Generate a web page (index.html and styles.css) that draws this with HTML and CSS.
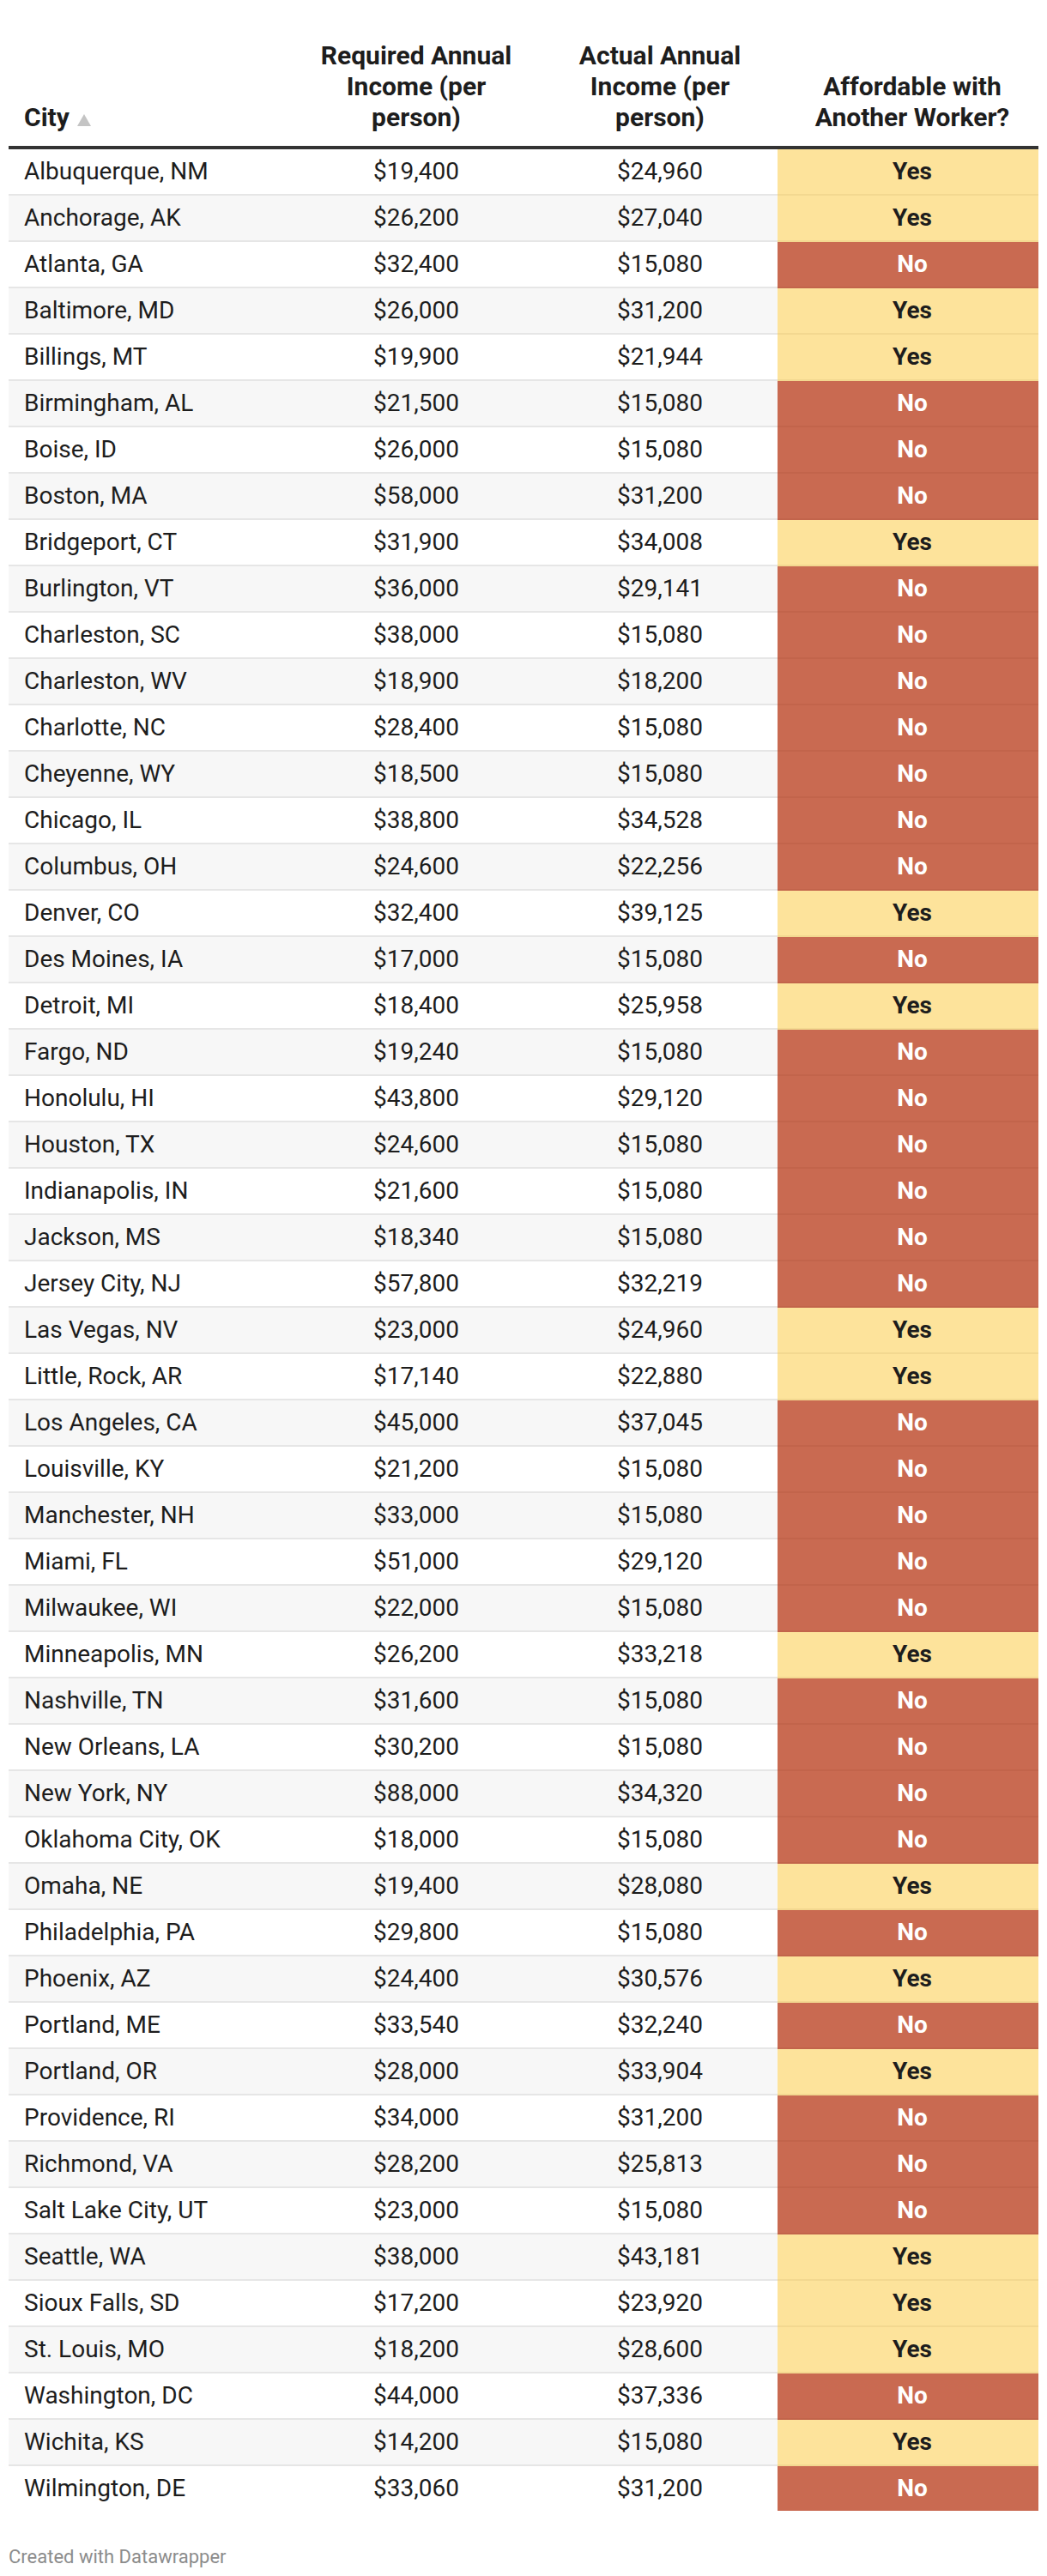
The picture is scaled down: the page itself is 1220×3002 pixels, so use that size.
FILE: index.html
```html
<!DOCTYPE html>
<html lang="en">
<head>
<meta charset="utf-8">
<title>Affordability table</title>
<link rel="stylesheet" href="styles.css">
</head>
<body>
<div class="wrap">
<div class="dw-table" role="table">
<div class="row head" role="row">
<div class="cell city" role="columnheader">City <svg class="sort" width="16" height="14" viewBox="0 0 16 14"><polygon points="8,0 16,14 0,14" fill="#c4c4c4"/></svg></div>
<div class="cell num" role="columnheader">Required Annual<br>Income (per<br>person)</div>
<div class="cell num" role="columnheader">Actual Annual<br>Income (per<br>person)</div>
<div class="cell aff" role="columnheader">Affordable with<br>Another Worker?</div>
</div>
<div class="row"><div class="cell city">Albuquerque, NM</div><div class="cell num">$19,400</div><div class="cell num">$24,960</div><div class="cell aff yes">Yes</div></div>
<div class="row"><div class="cell city">Anchorage, AK</div><div class="cell num">$26,200</div><div class="cell num">$27,040</div><div class="cell aff yes">Yes</div></div>
<div class="row"><div class="cell city">Atlanta, GA</div><div class="cell num">$32,400</div><div class="cell num">$15,080</div><div class="cell aff no">No</div></div>
<div class="row"><div class="cell city">Baltimore, MD</div><div class="cell num">$26,000</div><div class="cell num">$31,200</div><div class="cell aff yes">Yes</div></div>
<div class="row"><div class="cell city">Billings, MT</div><div class="cell num">$19,900</div><div class="cell num">$21,944</div><div class="cell aff yes">Yes</div></div>
<div class="row"><div class="cell city">Birmingham, AL</div><div class="cell num">$21,500</div><div class="cell num">$15,080</div><div class="cell aff no">No</div></div>
<div class="row"><div class="cell city">Boise, ID</div><div class="cell num">$26,000</div><div class="cell num">$15,080</div><div class="cell aff no">No</div></div>
<div class="row"><div class="cell city">Boston, MA</div><div class="cell num">$58,000</div><div class="cell num">$31,200</div><div class="cell aff no">No</div></div>
<div class="row"><div class="cell city">Bridgeport, CT</div><div class="cell num">$31,900</div><div class="cell num">$34,008</div><div class="cell aff yes">Yes</div></div>
<div class="row"><div class="cell city">Burlington, VT</div><div class="cell num">$36,000</div><div class="cell num">$29,141</div><div class="cell aff no">No</div></div>
<div class="row"><div class="cell city">Charleston, SC</div><div class="cell num">$38,000</div><div class="cell num">$15,080</div><div class="cell aff no">No</div></div>
<div class="row"><div class="cell city">Charleston, WV</div><div class="cell num">$18,900</div><div class="cell num">$18,200</div><div class="cell aff no">No</div></div>
<div class="row"><div class="cell city">Charlotte, NC</div><div class="cell num">$28,400</div><div class="cell num">$15,080</div><div class="cell aff no">No</div></div>
<div class="row"><div class="cell city">Cheyenne, WY</div><div class="cell num">$18,500</div><div class="cell num">$15,080</div><div class="cell aff no">No</div></div>
<div class="row"><div class="cell city">Chicago, IL</div><div class="cell num">$38,800</div><div class="cell num">$34,528</div><div class="cell aff no">No</div></div>
<div class="row"><div class="cell city">Columbus, OH</div><div class="cell num">$24,600</div><div class="cell num">$22,256</div><div class="cell aff no">No</div></div>
<div class="row"><div class="cell city">Denver, CO</div><div class="cell num">$32,400</div><div class="cell num">$39,125</div><div class="cell aff yes">Yes</div></div>
<div class="row"><div class="cell city">Des Moines, IA</div><div class="cell num">$17,000</div><div class="cell num">$15,080</div><div class="cell aff no">No</div></div>
<div class="row"><div class="cell city">Detroit, MI</div><div class="cell num">$18,400</div><div class="cell num">$25,958</div><div class="cell aff yes">Yes</div></div>
<div class="row"><div class="cell city">Fargo, ND</div><div class="cell num">$19,240</div><div class="cell num">$15,080</div><div class="cell aff no">No</div></div>
<div class="row"><div class="cell city">Honolulu, HI</div><div class="cell num">$43,800</div><div class="cell num">$29,120</div><div class="cell aff no">No</div></div>
<div class="row"><div class="cell city">Houston, TX</div><div class="cell num">$24,600</div><div class="cell num">$15,080</div><div class="cell aff no">No</div></div>
<div class="row"><div class="cell city">Indianapolis, IN</div><div class="cell num">$21,600</div><div class="cell num">$15,080</div><div class="cell aff no">No</div></div>
<div class="row"><div class="cell city">Jackson, MS</div><div class="cell num">$18,340</div><div class="cell num">$15,080</div><div class="cell aff no">No</div></div>
<div class="row"><div class="cell city">Jersey City, NJ</div><div class="cell num">$57,800</div><div class="cell num">$32,219</div><div class="cell aff no">No</div></div>
<div class="row"><div class="cell city">Las Vegas, NV</div><div class="cell num">$23,000</div><div class="cell num">$24,960</div><div class="cell aff yes">Yes</div></div>
<div class="row"><div class="cell city">Little, Rock, AR</div><div class="cell num">$17,140</div><div class="cell num">$22,880</div><div class="cell aff yes">Yes</div></div>
<div class="row"><div class="cell city">Los Angeles, CA</div><div class="cell num">$45,000</div><div class="cell num">$37,045</div><div class="cell aff no">No</div></div>
<div class="row"><div class="cell city">Louisville, KY</div><div class="cell num">$21,200</div><div class="cell num">$15,080</div><div class="cell aff no">No</div></div>
<div class="row"><div class="cell city">Manchester, NH</div><div class="cell num">$33,000</div><div class="cell num">$15,080</div><div class="cell aff no">No</div></div>
<div class="row"><div class="cell city">Miami, FL</div><div class="cell num">$51,000</div><div class="cell num">$29,120</div><div class="cell aff no">No</div></div>
<div class="row"><div class="cell city">Milwaukee, WI</div><div class="cell num">$22,000</div><div class="cell num">$15,080</div><div class="cell aff no">No</div></div>
<div class="row"><div class="cell city">Minneapolis, MN</div><div class="cell num">$26,200</div><div class="cell num">$33,218</div><div class="cell aff yes">Yes</div></div>
<div class="row"><div class="cell city">Nashville, TN</div><div class="cell num">$31,600</div><div class="cell num">$15,080</div><div class="cell aff no">No</div></div>
<div class="row"><div class="cell city">New Orleans, LA</div><div class="cell num">$30,200</div><div class="cell num">$15,080</div><div class="cell aff no">No</div></div>
<div class="row"><div class="cell city">New York, NY</div><div class="cell num">$88,000</div><div class="cell num">$34,320</div><div class="cell aff no">No</div></div>
<div class="row"><div class="cell city">Oklahoma City, OK</div><div class="cell num">$18,000</div><div class="cell num">$15,080</div><div class="cell aff no">No</div></div>
<div class="row"><div class="cell city">Omaha, NE</div><div class="cell num">$19,400</div><div class="cell num">$28,080</div><div class="cell aff yes">Yes</div></div>
<div class="row"><div class="cell city">Philadelphia, PA</div><div class="cell num">$29,800</div><div class="cell num">$15,080</div><div class="cell aff no">No</div></div>
<div class="row"><div class="cell city">Phoenix, AZ</div><div class="cell num">$24,400</div><div class="cell num">$30,576</div><div class="cell aff yes">Yes</div></div>
<div class="row"><div class="cell city">Portland, ME</div><div class="cell num">$33,540</div><div class="cell num">$32,240</div><div class="cell aff no">No</div></div>
<div class="row"><div class="cell city">Portland, OR</div><div class="cell num">$28,000</div><div class="cell num">$33,904</div><div class="cell aff yes">Yes</div></div>
<div class="row"><div class="cell city">Providence, RI</div><div class="cell num">$34,000</div><div class="cell num">$31,200</div><div class="cell aff no">No</div></div>
<div class="row"><div class="cell city">Richmond, VA</div><div class="cell num">$28,200</div><div class="cell num">$25,813</div><div class="cell aff no">No</div></div>
<div class="row"><div class="cell city">Salt Lake City, UT</div><div class="cell num">$23,000</div><div class="cell num">$15,080</div><div class="cell aff no">No</div></div>
<div class="row"><div class="cell city">Seattle, WA</div><div class="cell num">$38,000</div><div class="cell num">$43,181</div><div class="cell aff yes">Yes</div></div>
<div class="row"><div class="cell city">Sioux Falls, SD</div><div class="cell num">$17,200</div><div class="cell num">$23,920</div><div class="cell aff yes">Yes</div></div>
<div class="row"><div class="cell city">St. Louis, MO</div><div class="cell num">$18,200</div><div class="cell num">$28,600</div><div class="cell aff yes">Yes</div></div>
<div class="row"><div class="cell city">Washington, DC</div><div class="cell num">$44,000</div><div class="cell num">$37,336</div><div class="cell aff no">No</div></div>
<div class="row"><div class="cell city">Wichita, KS</div><div class="cell num">$14,200</div><div class="cell num">$15,080</div><div class="cell aff yes">Yes</div></div>
<div class="row"><div class="cell city">Wilmington, DE</div><div class="cell num">$33,060</div><div class="cell num">$31,200</div><div class="cell aff no">No</div></div>
</div>
<div class="footer">Created with Datawrapper</div>
</div>
</body>
</html>
```

FILE: styles.css
```css
html, body {
  margin: 0;
  padding: 0;
  background: #ffffff;
}

body {
  font-family: Roboto, "Liberation Sans", Arial, sans-serif;
  color: #1d1d1d;
}

*, *::before, *::after {
  box-sizing: border-box;
}

.wrap {
  padding: 10px 10px 0 10px;
}

.dw-table {
  width: 1200px;
  font-size: 28px;
}

.row {
  display: grid;
  grid-template-columns: 328px 294px 274px 304px;
  height: 54px;
}

.row:nth-child(odd) .cell {
  background: #f7f7f7;
}

.cell {
  display: flex;
  align-items: center;
  justify-content: center;
  text-align: center;
  padding: 0 8px;
  line-height: 30px;
  white-space: nowrap;
  border-bottom: 2px solid #e6e6e6;
}

.cell.city {
  justify-content: flex-start;
  text-align: left;
  padding-left: 18px;
}

.cell.aff {
  padding-left: 18px;
  padding-right: 8px;
}

.row:last-child {
  height: 52px;
}

.row:last-child .cell {
  border-bottom: 0;
}

/* header */
.row.head {
  height: 164px;
}

.row.head .cell {
  background: #ffffff;
  align-items: flex-end;
  font-weight: 700;
  font-size: 30px;
  line-height: 36px;
  padding-top: 37px;
  padding-bottom: 15px;
  border-bottom: 4px solid #333333;
}

.sort {
  margin-left: 9px;
  margin-bottom: 8px;
  flex: none;
}

/* colored answer cells */
.row .cell.yes {
  background: #fde39b;
  color: #1d1d1d;
  font-weight: 700;
  border-bottom-color: #f3d890;
}

.row .cell.no {
  background: #c96a51;
  color: #ffffff;
  font-weight: 700;
  border-bottom-color: #c2644b;
}

.footer {
  margin-top: 41px;
  font-size: 22px;
  line-height: 26px;
  color: #8c8c8c;
}
```
